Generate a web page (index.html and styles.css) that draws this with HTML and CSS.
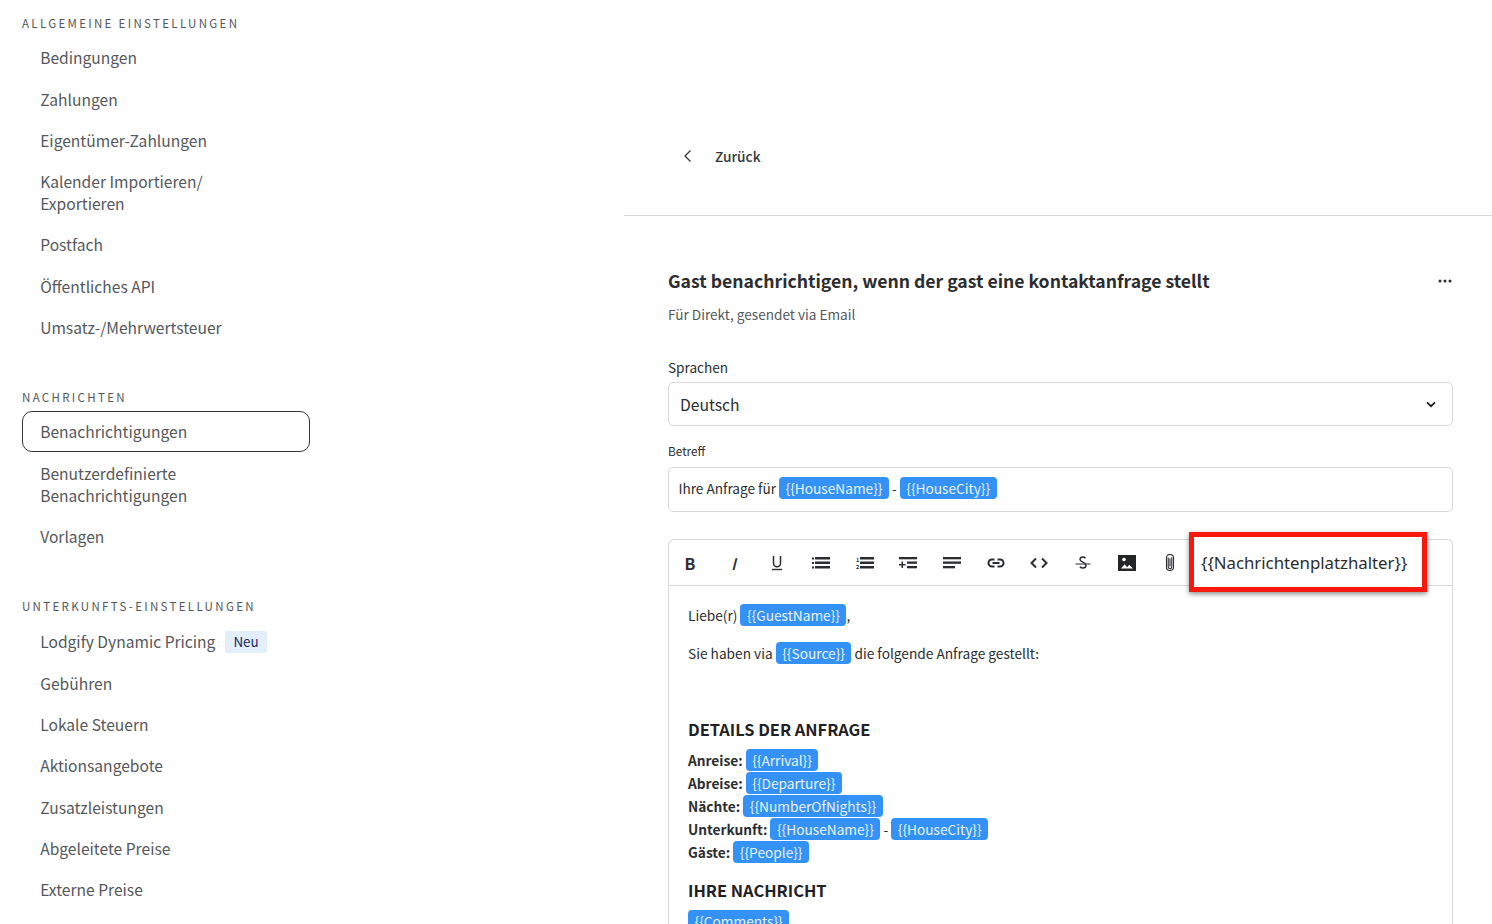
FILE: index.html
```html
<!DOCTYPE html>
<html lang="de">
<head>
<meta charset="utf-8">
<title>Benachrichtigungen</title>
<link rel="stylesheet" href="styles.css">
</head>
<body>
<div class="page">
  <aside class="sidebar">
    <section class="group">
      <h2 class="group-label">ALLGEMEINE EINSTELLUNGEN</h2>
      <a class="nav-item">Bedingungen</a>
      <a class="nav-item">Zahlungen</a>
      <a class="nav-item">Eigentümer-Zahlungen</a>
      <a class="nav-item">Kalender Importieren/<br>Exportieren</a>
      <a class="nav-item">Postfach</a>
      <a class="nav-item">Öffentliches API</a>
      <a class="nav-item">Umsatz-/Mehrwertsteuer</a>
    </section>
    <section class="group">
      <h2 class="group-label">NACHRICHTEN</h2>
      <a class="nav-item active">Benachrichtigungen</a>
      <a class="nav-item">Benutzerdefinierte<br>Benachrichtigungen</a>
      <a class="nav-item">Vorlagen</a>
    </section>
    <section class="group">
      <h2 class="group-label">UNTERKUNFTS-EINSTELLUNGEN</h2>
      <a class="nav-item">Lodgify Dynamic Pricing<span class="badge">Neu</span></a>
      <a class="nav-item">Gebühren</a>
      <a class="nav-item">Lokale Steuern</a>
      <a class="nav-item">Aktionsangebote</a>
      <a class="nav-item">Zusatzleistungen</a>
      <a class="nav-item">Abgeleitete Preise</a>
      <a class="nav-item">Externe Preise</a>
    </section>
  </aside>
  <main class="main">
    <header class="topbar">
      <svg class="back-icon" width="10" height="14" viewBox="0 0 10 14"><path d="M7.5 1.5 2 7l5.5 5.5" fill="none" stroke="#33363a" stroke-width="1.3"/></svg>
      <span class="back-label">Zurück</span>
    </header>
    <div class="content">
      <div class="title-row">
        <h1 class="title">Gast benachrichtigen, wenn der gast eine kontaktanfrage stellt</h1>
        <svg class="more-icon" width="14" height="4" viewBox="0 0 14 4"><circle cx="2" cy="2" r="1.5"/><circle cx="7" cy="2" r="1.5"/><circle cx="12" cy="2" r="1.5"/></svg>
      </div>
      <p class="subtitle">Für Direkt, gesendet via Email</p>
      <label class="field-label">Sprachen</label>
      <div class="select">
        <span>Deutsch</span>
        <svg width="10" height="7" viewBox="0 0 10 7"><path d="M1 1.3 5 5.2l4-3.9" fill="none" stroke="#1c1e21" stroke-width="1.7"/></svg>
      </div>
      <label class="small-label">Betreff</label>
      <div class="subject">Ihre Anfrage für <span class="tag">{{HouseName}}</span> - <span class="tag">{{HouseCity}}</span></div>
      <div class="editor">
        <div class="toolbar">
          <span class="tool tool-text tool-b">B</span>
          <span class="tool tool-text tool-i">I</span>
          <span class="tool"><svg width="14" height="18" viewBox="0 0 14 18"><path d="M3.5 2v7.300a3.500 3.500 0 0 0 7 0V2" fill="none" stroke="#2b2d30" stroke-width="1.500"/><path d="M2 15.500h10" stroke="#2b2d30" stroke-width="1.400"/></svg></span>
          <span class="tool"><svg width="18" height="14" viewBox="0 0 18 14" fill="#2b2d30"><rect x="0" y="1.500" width="2" height="2"/><rect x="0" y="6" width="2" height="2"/><rect x="0" y="10.500" width="2" height="2"/><rect x="3" y="1" width="15" height="2.500"/><rect x="3" y="5.500" width="15" height="2.500"/><rect x="3" y="10" width="15" height="2.500"/></svg></span>
          <span class="tool"><svg width="18" height="14" viewBox="0 0 18 14" fill="#2b2d30"><rect x="4" y="1" width="14" height="2.500"/><rect x="4" y="5.500" width="14" height="2.500"/><rect x="4" y="10" width="14" height="2.500"/><text class="list-num" x="0" y="5.500">1</text><text class="list-num" x="0" y="12.500">2</text></svg></span>
          <span class="tool"><svg width="18" height="14" viewBox="0 0 18 14" fill="#2b2d30"><rect x="0" y="1" width="18" height="2.300"/><rect x="8" y="5.500" width="10" height="2.300"/><rect x="8" y="10" width="10" height="2.300"/><path d="M0 8h2.500V5.500h1.500V8h2.500v1.500H4V12H2.500V9.500H0z"/></svg></span>
          <span class="tool"><svg width="18" height="14" viewBox="0 0 18 14" fill="#2b2d30"><rect x="0" y="1" width="18" height="2.300"/><rect x="0" y="5.500" width="18" height="2.300"/><rect x="0" y="10" width="12" height="2.300"/></svg></span>
          <span class="tool"><svg width="18" height="10" viewBox="0 0 18 10" fill="none" stroke="#2b2d30" stroke-width="2"><path d="M7.500 1.500H5a3.500 3.500 0 0 0 0 7h2.500M10.500 1.500H13a3.500 3.500 0 0 1 0 7h-2.500M5.500 5h7"/></svg></span>
          <span class="tool"><svg width="18" height="12" viewBox="0 0 18 12" fill="none" stroke="#2b2d30" stroke-width="2"><path d="M6 1.500 1.500 6 6 10.500M12 1.500 16.500 6 12 10.500"/></svg></span>
          <span class="tool"><svg width="16" height="16" viewBox="0 0 16 16" fill="none" stroke="#2b2d30"><path d="M10.500 3.200C9.800 2.400 8.800 2 7.800 2 6 2 5 3 5 4.400c0 3 6 2.600 6 5.800 0 1.600-1.300 2.800-3.200 2.800-1.200 0-2.200-.5-3-1.300" stroke-width="1.400"/><path d="M.5 9h15" stroke-width="1"/></svg></span>
          <span class="tool"><svg width="18" height="16" viewBox="0 0 18 16"><rect width="18" height="16" fill="#232527"/><path d="M3 13.500l3.600-4.300 2.600 3 2-2.400 3.800 3.700z" fill="#fff"/><circle cx="6" cy="4.500" r="1.800" fill="#fff"/></svg></span>
          <span class="tool"><svg width="10" height="17" viewBox="0 0 10 17" fill="none" stroke="#2b2d30" stroke-width="1.100"><path d="M5 4.500v8"/><path d="M3.200 3.500v9.300a1.800 1.800 0 0 0 3.600 0V3.200"/><path d="M1.500 3.500v9.500a3.500 3.500 0 0 0 7 0V3.500a3.500 3.100 0 0 0-7 0"/></svg></span>
          <div class="placeholder-callout">{{Nachrichtenplatzhalter}}</div>
        </div>
        <div class="editor-body">
          <p class="para">Liebe(r) <span class="tag">{{GuestName}}</span>,</p>
          <p class="para">Sie haben via <span class="tag">{{Source}}</span> die folgende Anfrage gestellt:</p>
          <h3 class="section-head first">DETAILS DER ANFRAGE</h3>
          <div class="detail"><b>Anreise:</b> <span class="tag">{{Arrival}}</span></div>
          <div class="detail"><b>Abreise:</b> <span class="tag">{{Departure}}</span></div>
          <div class="detail"><b>Nächte:</b> <span class="tag">{{NumberOfNights}}</span></div>
          <div class="detail"><b>Unterkunft:</b> <span class="tag">{{HouseName}}</span> - <span class="tag">{{HouseCity}}</span></div>
          <div class="detail"><b>Gäste:</b> <span class="tag">{{People}}</span></div>
          <h3 class="section-head">IHRE NACHRICHT</h3>
          <div class="detail"><span class="tag">{{Comments}}</span></div>
        </div>
      </div>
    </div>
  </main>
</div>
</body>
</html>
```
FILE: styles.css
```css
* { box-sizing: border-box; }
html, body { margin: 0; padding: 0; height: 100%; overflow: hidden; background: #fff; }
body { font-family: "Noto Sans CJK SC", "Liberation Sans", sans-serif; color: #2b2d30; }
.page { display: flex; height: 924px; overflow: hidden; }

.sidebar { width: 624px; flex: none; padding: 11.9px 0 0 22px; }
.group { width: 288px; margin-bottom: 38.6px; }
.group-label { margin: 0 0 3.7px; padding-top: 1px; height: 21px; font-size: 11.5px; line-height: 20px; font-weight: 400; letter-spacing: 2.33px; color: #55585c; }
.nav-item { display: block; padding: 8.65px 17.2px; border: 1px solid transparent; border-radius: 10px; font-size: 15.6px; line-height: 22px; color: #55585c; }
.nav-item.active { border-color: #33363a; }
.badge { display: inline-block; margin-left: 10px; padding: 0 8px; height: 22px; line-height: 21px; border-radius: 3px; background: #e3eefb; color: #12296b; font-size: 13.4px; vertical-align: 1px; }

.main { flex: 1; min-width: 0; }
.topbar { height: 216px; border-bottom: 1px solid #d9d9d9; padding: 96px 0 0 59px; display: flex; align-items: center; gap: 22px; }
.back-icon { flex: none; }
.back-label { font-size: 13.7px; font-weight: 500; line-height: 20px; color: #33363a; }

.content { padding: 0 39px 0 44px; }
.title-row { display: flex; justify-content: space-between; align-items: center; padding-top: 51px; height: 78px; margin-bottom: 1px; }
.title { margin: 0; font-size: 17.6px; line-height: 27px; font-weight: 700; color: #2b2d30; }
.more-icon { margin: 1px 1px 0 0; fill: #2b2d30; }
.subtitle { margin: 10px 0 0; font-size: 13.6px; line-height: 20px; color: #55585c; }
.field-label { display: block; margin-top: 33px; font-size: 13.6px; line-height: 20px; color: #2b2d30; }
.select { display: flex; align-items: center; justify-content: space-between; margin-top: 5px; height: 44px; padding: 0 16px 0 11px; border: 1px solid #d9d9d9; border-radius: 5px; font-size: 15.7px; color: #2b2d30; }
.small-label { display: block; margin-top: 16px; font-size: 11.8px; line-height: 18px; color: #2b2d30; }
.subject { margin-top: 7px; height: 45px; padding: 0 9.5px 4px; display: flex; align-items: center; border: 1px solid #d9d9d9; border-radius: 5px; font-size: 13.6px; color: #2b2d30; white-space: pre; }
.tag { display: inline-block; padding: 0 6.5px; height: 22px; line-height: 22px; border-radius: 4px; background: #3492f6; color: #e9f3ff; font-size: 13.7px; font-weight: 400; }

.editor { margin-top: 27px; border: 1px solid #d9d9d9; border-bottom: 0; border-radius: 6px 6px 0 0; }
.toolbar { position: relative; display: flex; align-items: center; height: 46px; border-bottom: 1px solid #d9d9d9; margin-left: -1px; }
.tool { width: 43.7px; flex: none; display: flex; align-items: center; justify-content: center; color: #2b2d30; }
.tool-text { font-size: 16px; line-height: 20px; }
.tool-b { font-weight: 700; }
.tool-i { font-style: italic; font-weight: 500; }
.list-num { font-size: 5.5px; font-weight: 700; }
.placeholder-callout { position: absolute; left: 521px; top: -8px; width: 238px; height: 60px; border: 5px solid #f8180d; box-shadow: 0 2px 5px rgba(0,0,0,.45); background: #fff; padding-left: 7px; font-family: "Noto Sans", sans-serif; font-size: 16.8px; line-height: 51px; color: #2b2d30; white-space: nowrap; }

.editor-body { padding: 18px 19px 0; font-size: 13.7px; color: #2b2d30; }
.para { margin: 0 0 16px; line-height: 22px; }
.section-head { margin: 0 0 7px; font-size: 16.4px; line-height: 26px; font-weight: 700; color: #1f2124; }
.section-head.first { margin-top: 52px; }
.section-head:not(.first) { margin-top: 13px; }
.detail { line-height: 23px; height: 23px; }
.detail b { font-weight: 700; }
```
